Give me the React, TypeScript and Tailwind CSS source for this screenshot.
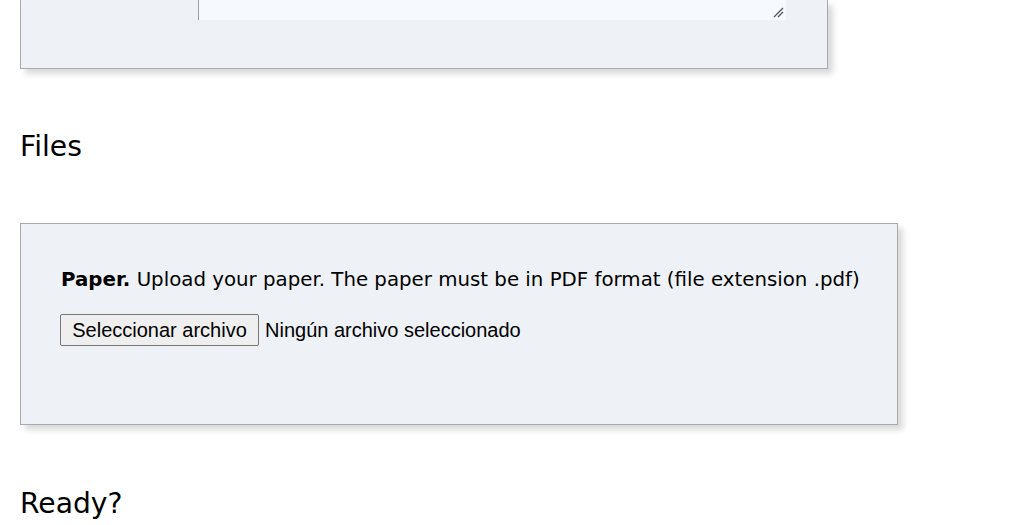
import React from "react";

export default function App() {
  return (
    <div className="w-[1028px] h-[525px] overflow-hidden bg-white text-black" style={{ fontFamily: '"DejaVu Sans", Verdana, sans-serif' }}>
      <div className="pl-[20px] w-[828px]">
        <div className="relative h-[69px] border border-t-0 border-[#a9a9a9] bg-[#eef1f6] shadow-[5px_5px_6px_rgba(0,0,0,0.15)]">
          <div className="ml-[177px] w-[588px] h-[20px] bg-[#f6f9fd] border-l border-[#a0a0a0] relative">
            <svg className="absolute right-[2px] bottom-[2px]" width="11" height="11" viewBox="0 0 11 11">
              <path d="M1 10 L10 1 M5 10 L10 5" stroke="#555" strokeWidth="1.3" />
            </svg>
          </div>
        </div>
      </div>
      <h2 className="mt-[61px] ml-[20px] text-[28.2px] leading-[34px] font-normal">Files</h2>
      <div className="mt-[59px] ml-[20px] w-[878px] h-[202px] border border-[#a9a9a9] bg-[#eef1f6] shadow-[5px_5px_6px_rgba(0,0,0,0.15)] px-[40px] pt-[43px]">
        <p className="text-[19.8px] leading-[26px] whitespace-nowrap">
          <b>Paper.</b> Upload your paper. The paper must be in PDF format (file extension .pdf)
        </p>
        <div className="mt-[21px] -ml-[1px] flex items-center" style={{ fontFamily: '"Liberation Sans", Arial, sans-serif' }}>
          <button className="h-[32px] w-[199px] border border-[#767676] rounded-[2px] bg-[#efefef] text-[20px] text-black flex items-center justify-center">
            Seleccionar archivo
          </button>
          <span className="ml-[6px] text-[20px]">Ningún archivo seleccionado</span>
        </div>
      </div>
      <h2 className="mt-[62px] ml-[20px] text-[28.2px] leading-[34px] font-normal">Ready?</h2>
    </div>
  );
}
